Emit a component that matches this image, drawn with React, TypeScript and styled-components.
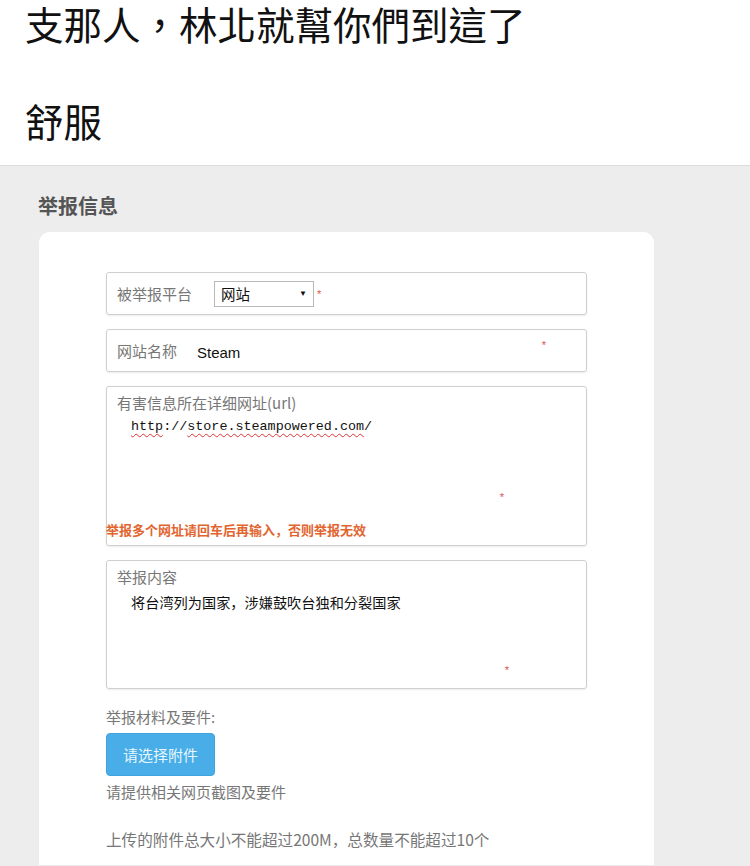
import React from 'react';
import styled, { createGlobalStyle } from 'styled-components';

const GlobalStyle = createGlobalStyle`
  html, body {
    margin: 0;
    padding: 0;
    background: #ededed;
  }
  body {
    font-family: "Microsoft YaHei", "Noto Sans CJK SC", "Liberation Sans", sans-serif;
  }
`;

const Post = styled.div`
  background: #fff;
  height: 166px;
  border-bottom: 1px solid #dcdcdc;
  padding-left: 25px;
  box-sizing: border-box;
  font-family: "Noto Sans CJK TC", "Noto Sans CJK SC", sans-serif;
  color: #111;
`;

const PostLine = styled.p<{ $gap?: number }>`
  margin: 0;
  font-size: 38.5px;
  line-height: 46px;
  white-space: nowrap;
  height: ${({ $gap }) => ($gap ? `${$gap}px` : '46px')};
`;

const Screen = styled.div`
  background: #ededed;
  padding: 24px 0 0 0;
  height: 699px;
  box-sizing: border-box;
  overflow: hidden;
`;

const Heading = styled.h2`
  margin: 0 0 10px 38px;
  font-size: 20px;
  line-height: 32px;
  font-weight: 700;
  color: #555;
  font-family: "Noto Sans CJK SC", sans-serif;
`;

const Card = styled.div`
  background: #fff;
  margin-left: 39px;
  width: 615px;
  border-radius: 11px 11px 0 0;
  padding: 40px 67px 60px 67px;
  box-sizing: border-box;
  display: flex;
  flex-direction: column;
  gap: 14px;
`;

const Field = styled.div<{ $h: number }>`
  position: relative;
  height: ${({ $h }) => $h}px;
  border: 1px solid #cfcfcf;
  border-radius: 3px;
  box-shadow: 0 1px 2px rgba(0, 0, 0, 0.08);
  box-sizing: border-box;
  padding: 0 10px;
`;

const Row = styled.div`
  display: flex;
  align-items: center;
  height: 100%;
`;

const Label = styled.span`
  font-family: "Noto Sans CJK SC", sans-serif;
  font-size: 15px;
  color: #777;
  width: 97px;
  flex: none;
`;

const Select = styled.div`
  display: flex;
  align-items: center;
  justify-content: space-between;
  width: 100px;
  height: 26px;
  border: 1px solid #b9b9b9;
  box-sizing: border-box;
  padding: 0 6px 0 6px;
  font-size: 14.5px;
  color: #111;
  font-family: "Noto Sans CJK SC", sans-serif;
`;

const Arrow = styled.span`
  font-family: "Liberation Sans", sans-serif;
  font-size: 8px;
  color: #111;
`;

const Star = styled.span`
  color: #d9534f;
  font-size: 11px;
  margin-left: 3px;
  font-family: "Liberation Sans", sans-serif;
`;

const FloatStar = styled(Star)<{ $right: number; $bottom: number }>`
  position: absolute;
  right: ${({ $right }) => $right}px;
  bottom: ${({ $bottom }) => $bottom}px;
`;

const Value = styled.span`
  font-family: "Liberation Sans", sans-serif;
  font-size: 15px;
  color: #111;
  margin-left: -17px;
  padding-top: 4px;
`;

const BlockLabel = styled.div`
  font-family: "Noto Sans CJK SC", sans-serif;
  font-size: 15px;
  color: #777;
  margin-top: 5px;
  line-height: 21px;
`;

const Url = styled.div`
  font-family: "Liberation Mono", monospace;
  font-size: 13.4px;
  color: #111;
  margin: 6px 0 0 14px;
`;

const Misspelled = styled.span`
  text-decoration: underline wavy #d33;
  text-decoration-thickness: 1px;
  text-underline-offset: 3px;
`;

const Warning = styled.div`
  position: absolute;
  left: -1px;
  bottom: 6px;
  font-family: "Noto Sans CJK SC", sans-serif;
  font-size: 13px;
  font-weight: 700;
  color: #e2652f;
`;

const Content = styled.div`
  font-family: "Noto Sans CJK SC", sans-serif;
  font-size: 14.2px;
  color: #111;
  margin: 5px 0 0 14px;
`;

const Upload = styled.div`
  display: flex;
  flex-direction: column;
  align-items: flex-start;
  margin-top: 4px;
  font-family: "Noto Sans CJK SC", sans-serif;
  font-size: 15px;
  color: #777;
`;

const Button = styled.button`
  margin-top: 6px;
  width: 109px;
  height: 43px;
  background: #49aee8;
  border: 1px solid #3ea3df;
  border-radius: 4px;
  color: #e6f6ff;
  font-family: "Noto Sans CJK SC", sans-serif;
  font-size: 15px;
  padding: 0;
`;

const Hint = styled.div<{ $top: number; $size?: number }>`
  margin-top: ${({ $top }) => $top}px;
  font-size: ${({ $size }) => $size ?? 15}px;
  line-height: 20px;
`;

export default function App() {
  return (
    <>
      <GlobalStyle />
      <Post>
        <PostLine $gap={97}>支那人，林北就幫你們到這了</PostLine>
        <PostLine>舒服</PostLine>
      </Post>
      <Screen>
        <Heading>举报信息</Heading>
        <Card>
          <Field $h={43}>
            <Row>
              <Label>被举报平台</Label>
              <Select>
                网站
                <Arrow>▼</Arrow>
              </Select>
              <Star>*</Star>
            </Row>
          </Field>
          <Field $h={43}>
            <Row>
              <Label>网站名称</Label>
              <Value>Steam</Value>
            </Row>
            <FloatStar $right={40} $bottom={20}>*</FloatStar>
          </Field>
          <Field $h={160}>
            <BlockLabel>有害信息所在详细网址(url)</BlockLabel>
            <Url>
              <Misspelled>http</Misspelled>://<Misspelled>store.steampowered.com</Misspelled>/
            </Url>
            <FloatStar $right={82} $bottom={42}>*</FloatStar>
            <Warning>举报多个网址请回车后再输入，否则举报无效</Warning>
          </Field>
          <Field $h={129}>
            <BlockLabel>举报内容</BlockLabel>
            <Content>将台湾列为国家，涉嫌鼓吹台独和分裂国家</Content>
            <FloatStar $right={77} $bottom={12}>*</FloatStar>
          </Field>
          <Upload>
            <Hint $top={0}>举报材料及要件:</Hint>
            <Button>请选择附件</Button>
            <Hint $top={6}>请提供相关网页截图及要件</Hint>
            <Hint $top={27} $size={15.6}>上传的附件总大小不能超过200M，总数量不能超过10个</Hint>
          </Upload>
        </Card>
      </Screen>
    </>
  );
}
